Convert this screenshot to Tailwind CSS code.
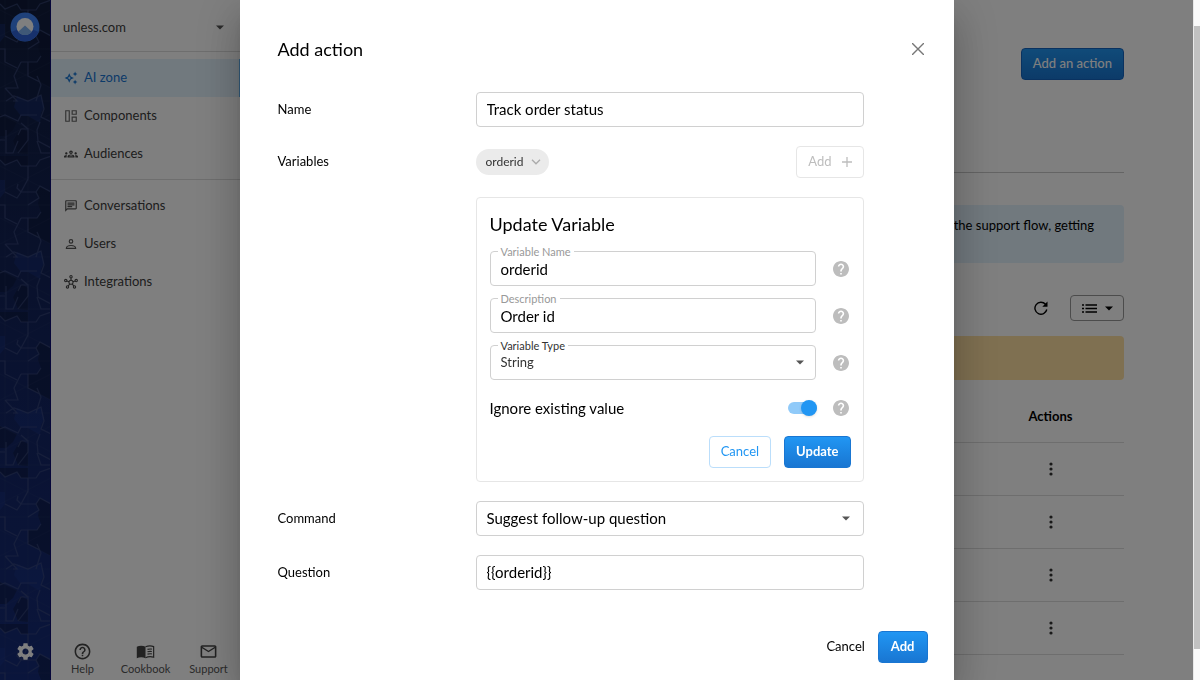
<!DOCTYPE html>
<html lang="en">
<head>
    <meta charset="UTF-8">
    <meta name="viewport" content="width=device-width, initial-scale=1.0">
    <title>Add action - Unless</title>
    <script src="https://cdn.jsdelivr.net/npm/@tailwindcss/browser@4"></script>
</head>
<body class="h-screen overflow-hidden bg-white font-['Lato',sans-serif] text-[13px] text-black">

    <!-- Shared icon shapes -->
    <svg class="hidden">
        <symbol id="caret" viewBox="0 0 10 6"><path d="M0 .5h10L5 5.5z" fill="currentColor"/></symbol>
        <symbol id="help" viewBox="2 2 20 20"><path fill="currentColor" d="M12 2C6.48 2 2 6.48 2 12s4.48 10 10 10 10-4.48 10-10S17.52 2 12 2zm1 17h-2v-2h2v2zm2.07-7.75l-.9.92C13.45 12.9 13 13.5 13 15h-2v-.5c0-1.1.45-2.1 1.17-2.83l1.24-1.26c.37-.36.59-.86.59-1.41 0-1.1-.9-2-2-2s-2 .9-2 2H8c0-2.21 1.79-4 4-4s4 1.79 4 4c0 .88-.36 1.68-.93 2.25z"/></symbol>
        <symbol id="dots" viewBox="0 0 4 14"><circle cx="2" cy="2" r="1.6"/><circle cx="2" cy="7" r="1.6"/><circle cx="2" cy="12" r="1.6"/></symbol>
    </svg>

    <div class="flex h-full pr-[7px]">
        <!-- Rail -->
        <nav class="relative flex w-[51px] shrink-0 flex-col items-center justify-between overflow-hidden border-r border-[#0a0a70] bg-linear-to-b from-[#101c3c] via-[#13245f] to-[#152b78] pt-3 pb-[19px]" aria-label="Main">
            <svg class="absolute inset-0 h-full w-full" aria-hidden="true">
                <defs>
                    <pattern id="tiles" width="51" height="156" patternUnits="userSpaceOnUse">
                        <path fill="#0b1432" fill-opacity=".4" d="M0 4l5 5 12-5 4 6h7V0H0zM28 62h9l4-6-3-8 1-6-3-6 4-6 11 6v52L28 76zM17 134l4-6 7 4v22l-10-1-5-12zM0 114l4 2 13 6-4 8-7 6H0z"/>
                        <path fill="#1a3796" fill-opacity=".3" d="M17 96l11 5 13-6 3 12-3 6-1 10-12-7-7 0-7-9zM0 24h5v12l-5 6z"/>
                        <g fill="none" stroke="#3a4a78" stroke-opacity=".2" stroke-width=".6">
                            <path d="M5 0v156M28 0v156M51 0v156M0 10l51 26M0 36l51-26M0 62l51 26M0 88l51-26M0 114l51 26M0 140l51-26M0 49h51M0 101h51M0 153h51"/>
                        </g>
                        <g fill="none" stroke="#3d4d80" stroke-opacity=".6" stroke-width="1.2">
                            <path d="M0 4l5 5 12-5 4 6h15l4-6 11-4M28 10v13l-7 13-4-4 1-4M5 36l12 6 4-6h15l4-6 11 6M28 49l11-7-3-6M0 49h5v13l12 6M28 62v14l12 6M21 62h16l4-6M21 62l-7 14 4 12-12 0M5 88l12 13-4 0M37 76l4 9-5 16M6 101l8-5 14 5 13-6 3 14-3 8 10 5M0 117l5-2 13 6 3-6h16M18 135l3-6h7v11l-10 13M28 129l-7-6M6 130v23h7l5-12M37 141l4 12h10M0 140h5M40 122l-3 8 1 11 13 7"/>
                        </g>
                    </pattern>
                </defs>
                <rect width="100%" height="100%" fill="url(#tiles)"/>
            </svg>
            <a href="#" class="relative" aria-label="Unless home">
                <svg class="size-[30px]" viewBox="0 0 30 30">
                    <circle cx="15" cy="15" r="14.5" fill="#3f82f5"/>
                    <path d="M1.500 20L15 14l13.500 6A14.500 14.500 0 0 1 1.500 20z" fill="#2f62d8"/>
                    <circle cx="15" cy="14.500" r="8.500" fill="#fff"/>
                    <path d="M15 13.500l6.800 6.200a8.500 8.500 0 0 1-13.600 0z" fill="#7fb1ee"/>
                </svg>
            </a>
            <a href="#" class="relative text-white" aria-label="Settings">
                <svg class="size-[19px]" viewBox="1 1 22 22"><path fill="currentColor" d="M19.14 12.94c.04-.3.06-.61.06-.94 0-.32-.02-.64-.07-.94l2.03-1.58c.18-.14.23-.41.12-.61l-1.92-3.32c-.12-.22-.37-.29-.59-.22l-2.39.96c-.5-.38-1.03-.7-1.62-.94l-.36-2.54c-.04-.24-.24-.41-.48-.41h-3.84c-.24 0-.43.17-.47.41l-.36 2.54c-.59.24-1.13.57-1.62.94l-2.39-.96c-.22-.08-.47 0-.59.22L2.74 8.87c-.12.21-.08.47.12.61l2.03 1.58c-.05.3-.09.63-.09.94s.02.64.07.94l-2.03 1.58c-.18.14-.23.41-.12.61l1.92 3.32c.12.22.37.29.59.22l2.39-.96c.5.38 1.03.7 1.62.94l.36 2.54c.05.24.24.41.48.41h3.84c.24 0 .44-.17.47-.41l.36-2.54c.59-.24 1.13-.56 1.62-.94l2.39.96c.22.08.47 0 .59-.22l1.92-3.32c.12-.22.07-.47-.12-.61l-2.01-1.58zM12 15.6c-1.98 0-3.6-1.62-3.6-3.6s1.62-3.6 3.6-3.6 3.6 1.62 3.6 3.6-1.62 3.6-3.6 3.600z"/></svg>
            </a>
        </nav>

        <!-- Sidebar -->
        <aside class="flex w-[189px] shrink-0 flex-col text-[#3c3c3c]">
            <div class="relative flex h-[52px] shrink-0 items-center border-b border-[#dcdcdc] pt-1">
                <select aria-label="Website" class="w-full appearance-none pl-3 text-[13px] outline-none">
                    <option>unless.com</option>
                </select>
                <svg class="pointer-events-none absolute right-4 h-[5px] w-2 text-[#555]"><use href="#caret"/></svg>
            </div>
            <ul class="mt-1.5 border-b border-[#dcdcdc] pt-px pb-1.5">
                <li>
                    <a href="#" class="flex h-[38px] items-center gap-1.5 border-r border-[#64b5f6] bg-[#e3f2fd] pl-[13px] text-[#1976d2]">
                        <svg class="size-3.5" viewBox="0 0 24 24"><path fill="currentColor" d="M19 9l1.250-2.750L23 5l-2.750-1.250L19 1l-1.250 2.750L15 5l2.750 1.250L19 9zm0 6l-1.250 2.750L15 19l2.750 1.250L19 23l1.250-2.750L23 19l-2.750-1.250L19 15zm-7.500-5.500L9 4 6.500 9.500 1 12l5.500 2.500L9 20l2.500-5.500L17 12l-5.500-2.500zm-1.510 3.490L9 15.170l-.99-2.180L5.830 12l2.180-.99L9 8.830l.99 2.180 2.170.99-2.170.99z"/></svg>
                        AI zone
                    </a>
                </li>
                <li>
                    <a href="#" class="flex h-[38px] items-center gap-1.5 pl-[13px]">
                        <svg class="size-3.5 text-[#666]" viewBox="0 0 24 24" fill="none" stroke="currentColor" stroke-width="2"><path d="M3 3h6v18H3zM14 3h7v6h-7zM14 14h7v7h-7z"/></svg>
                        Components
                    </a>
                </li>
                <li>
                    <a href="#" class="flex h-[38px] items-center gap-1.5 pl-[13px]">
                        <svg class="size-3.5 text-[#444]" viewBox="0 0 24 24"><path fill="currentColor" d="M4 13c1.100 0 2-.9 2-2s-.9-2-2-2-2 .9-2 2 .9 2 2 2zm1.130 1.100c-.37-.06-.74-.1-1.130-.1-.99 0-1.930.21-2.780.58C.48 14.900 0 15.620 0 16.430V18h4.500v-1.610c0-.83.23-1.610.63-2.290zM20 13c1.100 0 2-.9 2-2s-.9-2-2-2-2 .9-2 2 .9 2 2 2zm4 3.430c0-.81-.48-1.530-1.220-1.850-.85-.37-1.790-.58-2.780-.58-.39 0-.76.04-1.130.1.4.68.63 1.460.63 2.290V18H24v-1.570zm-7.760-2.780c-1.170-.52-2.610-.9-4.240-.9-1.630 0-3.070.39-4.240.9C6.680 14.130 6 15.210 6 16.390V18h12v-1.610c0-1.180-.68-2.260-1.760-2.740zM8.070 16c.09-.23.13-.39.91-.69.97-.38 1.990-.56 3.020-.56s2.050.18 3.020.56c.77.3.81.46.91.69H8.070zM12 8c.55 0 1 .45 1 1s-.45 1-1 1-1-.45-1-1 .45-1 1-1m0-2c-1.660 0-3 1.340-3 3s1.340 3 3 3 3-1.340 3-3-1.340-3-3-3z"/></svg>
                        Audiences
                    </a>
                </li>
            </ul>
            <ul class="mt-[7px]">
                <li>
                    <a href="#" class="flex h-[38px] items-center gap-1.5 pl-[13px]">
                        <svg class="size-3.5 text-[#555]" viewBox="0 0 24 24"><path fill="currentColor" d="M4 4h16v12H5.170L4 17.170V4m0-2c-1.100 0-1.990.9-1.990 2L2 22l4-4h14c1.100 0 2-.9 2-2V4c0-1.100-.9-2-2-2H4zm2 10h8v2H6v-2zm0-3h12v2H6V9zm0-3h12v2H6V6z"/></svg>
                        Conversations
                    </a>
                </li>
                <li>
                    <a href="#" class="flex h-[38px] items-center gap-1.5 pl-[13px]">
                        <svg class="size-3.5 text-[#555]" viewBox="0 0 24 24" fill="none" stroke="currentColor" stroke-width="2"><circle cx="12" cy="7.500" r="3"/><path d="M4 19.500h16c0-3-3.500-5-8-5s-8 2-8 5z"/></svg>
                        Users
                    </a>
                </li>
                <li>
                    <a href="#" class="flex h-[38px] items-center gap-1.5 pl-[13px]">
                        <svg class="size-3.5 text-[#444]" viewBox="0 0 24 24" fill="none" stroke="currentColor" stroke-width="1.800"><circle cx="12" cy="12.500" r="3.500"/><circle cx="12" cy="3" r="2"/><circle cx="3" cy="9.500" r="2"/><circle cx="21" cy="9.500" r="2"/><circle cx="6" cy="20.500" r="2"/><circle cx="18" cy="20.500" r="2"/><path d="M12 5v4M5 10.200l3.700 1.300M19 10.200l-3.700 1.300M7.200 19l2.500-3.500M16.800 19l-2.500-3.500"/></svg>
                        Integrations
                    </a>
                </li>
            </ul>
            <div class="mt-auto grid grid-cols-3 pb-1 text-[11px] leading-[15px] text-[#555]">
                <a href="#" class="flex flex-col items-center">
                    <svg class="size-[19px] text-[#444]" viewBox="0 0 24 24"><path fill="currentColor" d="M11 18h2v-2h-2v2zm1-16C6.480 2 2 6.480 2 12s4.480 10 10 10 10-4.480 10-10S17.520 2 12 2zm0 18c-4.410 0-8-3.590-8-8s3.590-8 8-8 8 3.590 8 8-3.590 8-8 8zm0-14c-2.210 0-4 1.790-4 4h2c0-1.100.9-2 2-2s2 .9 2 2c0 2-3 1.750-3 5h2c0-2.250 3-2.500 3-5 0-2.210-1.790-4-4-4z"/></svg>
                    Help
                </a>
                <a href="#" class="flex flex-col items-center">
                    <svg class="size-[19px] text-[#444]" viewBox="0 0 24 24"><path fill="currentColor" d="M1 6c3-1.500 8-1.500 11 0v14.500c-3-1.500-8-1.500-11 0z"/><path fill="none" stroke="currentColor" stroke-width="1.500" d="M12 6c3-1.200 7.500-1.400 10.300-.2v13.500c-3-1-7.300-.8-10.300.7M14.500 9.300c1.800-.5 3.700-.6 5.500-.3M14.500 12.300c1.800-.5 3.700-.6 5.500-.3M14.500 15.300c1.800-.5 3.700-.6 5.500-.3"/></svg>
                    Cookbook
                </a>
                <a href="#" class="flex flex-col items-center">
                    <svg class="size-[19px] text-[#444]" viewBox="0 0 24 24"><path fill="currentColor" d="M22 6c0-1.100-.9-2-2-2H4c-1.100 0-2 .9-2 2v12c0 1.100.9 2 2 2h16c1.100 0 2-.9 2-2V6zm-2 0l-8 5-8-5h16zm0 12H4V8l8 5 8-5v10z"/></svg>
                    Support
                </a>
            </div>
        </aside>

        <!-- Page behind the dialog -->
        <main class="min-w-0 flex-1 overflow-hidden pt-12 pr-[69px] pl-10">
            <div class="flex justify-end border-b border-[#c8c8c8] pb-[92px]">
                <button type="button" class="h-8 rounded-sm border border-[#1565c0] bg-linear-to-b from-[#2196f3] to-[#1976d2] px-[11px] text-[13px] font-medium text-white">Add an action</button>
            </div>
            <p class="mt-8 h-[58px] overflow-hidden rounded-sm bg-[#e3f2fd] pt-2.5 pr-[30px] text-right leading-5">during the support flow, getting</p>
            <div class="mt-8 flex items-center justify-end gap-[22px]">
                <button type="button" aria-label="Refresh">
                    <svg class="size-3.5" viewBox="0 0 14 14" fill="none"><path stroke="#000" stroke-width="1.400" d="M11.500 3.300A6 6 0 1 0 12.800 8.500"/><path fill="#000" d="M13.500.5v5.200H8.300z"/></svg>
                </button>
                <button type="button" class="flex h-[26px] w-[54px] items-center justify-center gap-2 rounded-sm border border-[#999]" aria-label="View">
                    <svg class="h-[9px] w-[15px]" viewBox="0 0 15 9" stroke="#000" stroke-width="1.300"><path d="M0 1h2M3.500 1H15M0 4.500h2M3.500 4.500H15M0 8h2M3.500 8H15"/></svg>
                    <svg class="h-[5px] w-2"><use href="#caret"/></svg>
                </button>
            </div>
            <div class="mt-[15px] h-11 rounded-sm bg-[#ffe0a3]"></div>
            <table class="mt-3 w-full border-collapse">
                <thead>
                    <tr class="h-[50px] border-b border-[#dcdcdc]"><th></th><th class="w-[147px] font-bold">Actions</th></tr>
                </thead>
                <tbody>
                    <tr class="h-[53px] border-b border-[#dcdcdc]"><td></td><td class="text-center"><button type="button" aria-label="Row actions" class="inline-flex align-middle text-[#333]"><svg class="h-3.5 w-1" fill="currentColor"><use href="#dots"/></svg></button></td></tr>
                    <tr class="h-[53px] border-b border-[#dcdcdc]"><td></td><td class="text-center"><button type="button" aria-label="Row actions" class="inline-flex align-middle text-[#333]"><svg class="h-3.5 w-1" fill="currentColor"><use href="#dots"/></svg></button></td></tr>
                    <tr class="h-[53px] border-b border-[#dcdcdc]"><td></td><td class="text-center"><button type="button" aria-label="Row actions" class="inline-flex align-middle text-[#333]"><svg class="h-3.5 w-1" fill="currentColor"><use href="#dots"/></svg></button></td></tr>
                    <tr class="h-[53px] border-b border-[#dcdcdc]"><td></td><td class="text-center"><button type="button" aria-label="Row actions" class="inline-flex align-middle text-[#333]"><svg class="h-3.5 w-1" fill="currentColor"><use href="#dots"/></svg></button></td></tr>
                </tbody>
            </table>
        </main>
    </div>

    <!-- Page scrollbar -->
    <div class="fixed inset-y-0 right-0 z-20 flex w-[7px] flex-col border-l border-[#e8e8e8] bg-[#fafafa] pt-[26px] pb-[31px]">
        <div class="flex-1 bg-[#c1c1c1]"></div>
    </div>

    <!-- Dialog -->
    <div class="fixed inset-y-0 right-[7px] left-0 z-10 flex justify-center overflow-hidden bg-black/50">
        <form role="dialog" aria-labelledby="dialog-title" class="flex w-full max-w-[714px] flex-col bg-white shadow-[0_11px_15px_-7px_rgba(0,0,0,0.2),0_24px_38px_3px_rgba(0,0,0,0.14),0_9px_46px_8px_rgba(0,0,0,0.12)]">
            <div class="flex h-[92px] items-center justify-between pr-[30px] pb-[6px] pl-[38px]">
                <h2 id="dialog-title" class="mt-3 text-lg">Add action</h2>
                <button type="button" aria-label="Close" class="mt-3 text-[#777]">
                    <svg class="size-3" viewBox="0 0 12 12" fill="none" stroke="currentColor" stroke-width="1.400"><path d="M0 0l12 12M12 0L0 12"/></svg>
                </button>
            </div>

            <div class="grid grid-cols-[198px_1fr] gap-y-[19px] pr-[90px] pl-[38px]">
                <label for="name" class="flex items-center">Name</label>
                <input id="name" type="text" value="Track order status" class="h-[35px] rounded-sm border border-[#d0d0d0] px-2.5 pb-0.5 text-[15px] outline-none">

                <span class="flex items-center">Variables</span>
                <div class="flex items-center justify-between">
                    <button type="button" class="flex h-[26px] items-center gap-2 rounded-full bg-[#ebebeb] pr-2 pl-2.5 text-xs text-[#333]">
                        orderid
                        <svg class="h-1.5 w-2.5 text-[#aaa]" viewBox="0 0 10 6" fill="none" stroke="currentColor" stroke-width="1.300"><path d="M1 .8l4 4 4-4"/></svg>
                    </button>
                    <button type="button" disabled class="flex h-8 items-center gap-2.5 rounded-sm border border-[#e6e6e6] px-[11px] text-[#bdbdbd]">
                        Add
                        <svg class="size-2.5" viewBox="0 0 10 10" fill="none" stroke="currentColor" stroke-width="1.300"><path d="M5 0v10M0 5h10"/></svg>
                    </button>
                </div>

                <fieldset class="col-start-2 rounded-sm border border-[#e6e6e6] pt-[13px] pr-3 pb-[13px] pl-[13px]" aria-labelledby="variable-title">
                    <h3 id="variable-title" class="mb-3.5 text-lg leading-[26px]">Update Variable</h3>
                    <div class="flex flex-col gap-3">
                        <div class="flex items-center gap-[17px] pr-0.5">
                            <div class="relative flex-1">
                                <label for="variable-name" class="absolute -top-1.5 left-2 bg-white px-[3px] text-[11px] leading-[14px] text-[#999]">Variable Name</label>
                                <input id="variable-name" type="text" value="orderid" class="h-[35px] w-full rounded-sm border border-[#d0d0d0] px-2.5 text-[15px] outline-none">
                            </div>
                            <button type="button" aria-label="Help" class="text-[#bdbdbd]"><svg class="size-4"><use href="#help"/></svg></button>
                        </div>
                        <div class="flex items-center gap-[17px] pr-0.5">
                            <div class="relative flex-1">
                                <label for="description" class="absolute -top-1.5 left-2 bg-white px-[3px] text-[11px] leading-[14px] text-[#999]">Description</label>
                                <input id="description" type="text" value="Order id" class="h-[35px] w-full rounded-sm border border-[#d0d0d0] px-2.5 text-[15px] outline-none">
                            </div>
                            <button type="button" aria-label="Help" class="text-[#bdbdbd]"><svg class="size-4"><use href="#help"/></svg></button>
                        </div>
                        <div class="flex items-center gap-[17px] pr-0.5">
                            <div class="relative flex flex-1 items-center">
                                <label for="variable-type" class="absolute -top-1.5 left-2 bg-white px-[3px] text-[11px] leading-[14px] text-[#333]">Variable Type</label>
                                <select id="variable-type" class="h-[35px] w-full appearance-none rounded-sm border border-[#d0d0d0] px-2.5 text-[13px] text-[#333] outline-none">
                                    <option>String</option>
                                </select>
                                <svg class="pointer-events-none absolute right-3 h-[5px] w-2 text-[#555]"><use href="#caret"/></svg>
                            </div>
                            <button type="button" aria-label="Help" class="text-[#bdbdbd]"><svg class="size-4"><use href="#help"/></svg></button>
                        </div>
                    </div>
                    <div class="mt-[18px] flex items-center pr-0.5">
                        <label for="ignore" class="flex-1 text-[15px] leading-5">Ignore existing value</label>
                        <label class="relative mr-4 flex h-4 w-[29px] items-center">
                            <input id="ignore" type="checkbox" role="switch" checked class="peer sr-only">
                            <span class="h-3 w-full rounded-full bg-[#90caf9]"></span>
                            <span class="absolute left-0 size-4 rounded-full bg-[#2196f3] shadow-sm peer-checked:left-[13px]"></span>
                        </label>
                        <button type="button" aria-label="Help" class="text-[#bdbdbd]"><svg class="size-4"><use href="#help"/></svg></button>
                    </div>
                    <div class="mt-[18px] flex justify-end gap-[13px]">
                        <button type="button" class="h-8 rounded-sm border border-[#bbdefb] px-[11px] text-[#2196f3]">Cancel</button>
                        <button type="button" class="h-8 rounded-sm border border-[#1976d2] bg-linear-to-b from-[#2196f3] to-[#1976d2] px-[11px] font-bold text-white">Update</button>
                    </div>
                </fieldset>

                <label for="command" class="flex items-center">Command</label>
                <div class="relative flex items-center">
                    <select id="command" class="h-[35px] w-full appearance-none rounded-sm border border-[#d0d0d0] px-2.5 text-[15px] outline-none">
                        <option>Suggest follow-up question</option>
                    </select>
                    <svg class="pointer-events-none absolute right-3.5 h-[5px] w-2 text-[#555]"><use href="#caret"/></svg>
                </div>

                <label for="question" class="flex items-center">Question</label>
                <input id="question" type="text" value="{{orderid}}" class="h-[35px] rounded-sm border border-[#d0d0d0] px-2.5 pb-0.5 text-[15px] outline-none">
            </div>

            <div class="mt-auto flex items-center justify-end gap-[13px] pr-[26px] pb-[17px]">
                <button type="button">Cancel</button>
                <button type="submit" class="h-8 rounded-sm border border-[#1976d2] bg-linear-to-b from-[#2196f3] to-[#1976d2] px-3 font-bold text-white">Add</button>
            </div>
        </form>
    </div>
</body>
</html>
